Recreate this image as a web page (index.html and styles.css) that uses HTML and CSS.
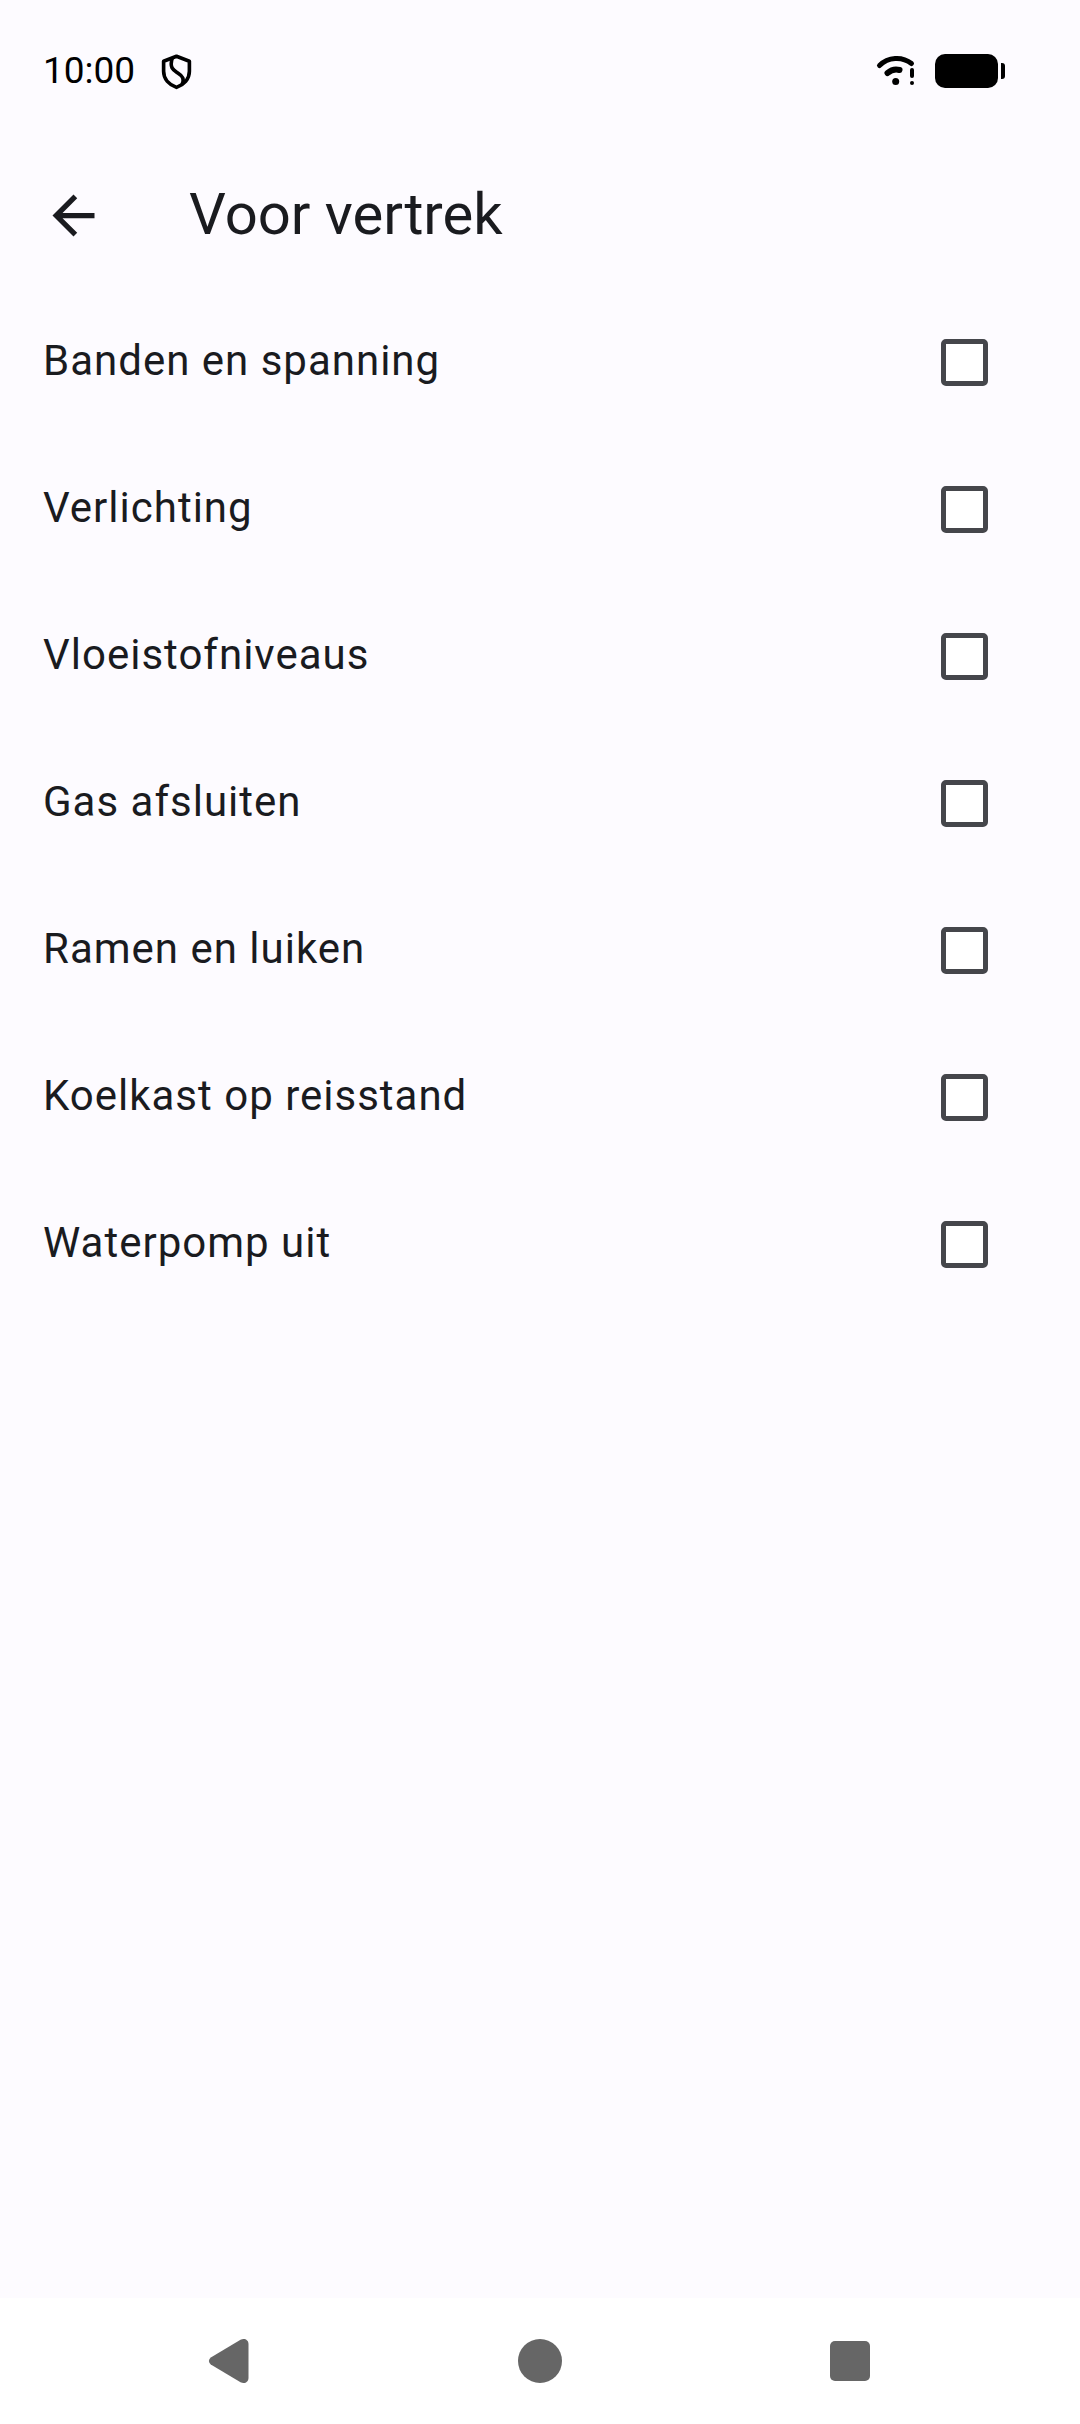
FILE: index.html
```html
<!DOCTYPE html>
<html lang="nl">
<head>
<meta charset="utf-8">
<meta name="viewport" content="width=device-width, initial-scale=1">
<title>Voor vertrek</title>
<link rel="stylesheet" href="styles.css">
</head>
<body>
<div class="screen">
  <div class="status-bar">
    <time class="clock">10:00</time>
    <svg class="shield" viewBox="0 0 98 112" width="33" height="37" fill="none" stroke="currentColor" stroke-width="11" stroke-linejoin="round" aria-hidden="true">
      <path d="M49 10 10 25V55C10 79 27 96 49 104 71 96 88 79 88 55V25Z"/>
      <path d="M36 16C27 45 40 52 52 60 69 71 73 79 66 95"/>
    </svg>
    <svg class="wifi" viewBox="0 0 42 38" width="42" height="38" fill="none" stroke="currentColor" stroke-width="5" stroke-linecap="round" aria-hidden="true">
      <path d="M4.500 13.500C13 5 27 4 36.500 11.500"/>
      <path d="M12.500 21C16 18 21 17 24.500 18" stroke-width="6"/>
      <circle cx="20.700" cy="29.500" r="3.500" fill="currentColor" stroke="none"/>
      <path d="M37 18V24" stroke-width="4"/>
      <circle cx="37" cy="31" r="2" fill="currentColor" stroke="none"/>
    </svg>
    <svg class="battery" viewBox="0 0 70 34" width="70" height="34" fill="currentColor" aria-hidden="true">
      <rect width="63" height="34" rx="10"/>
      <path d="M66 9h1a3 3 0 0 1 3 3v10a3 3 0 0 1-3 3h-1z"/>
    </svg>
  </div>

  <header class="app-bar">
    <button class="icon-button" type="button" aria-label="Terug">
      <svg viewBox="0 0 24 24" width="63" height="63" fill="currentColor" aria-hidden="true">
        <path d="M20 11H7.830l5.590-5.590L12 4l-8 8 8 8 1.410-1.410L7.830 13H20z"/>
      </svg>
    </button>
    <h1 class="title">Voor vertrek</h1>
  </header>

  <main class="content">
    <ul class="checklist">
      <li><label class="item"><span class="item-text">Banden en spanning</span><input class="check" type="checkbox"></label></li>
      <li><label class="item"><span class="item-text">Verlichting</span><input class="check" type="checkbox"></label></li>
      <li><label class="item"><span class="item-text">Vloeistofniveaus</span><input class="check" type="checkbox"></label></li>
      <li><label class="item"><span class="item-text">Gas afsluiten</span><input class="check" type="checkbox"></label></li>
      <li><label class="item"><span class="item-text">Ramen en luiken</span><input class="check" type="checkbox"></label></li>
      <li><label class="item"><span class="item-text">Koelkast op reisstand</span><input class="check" type="checkbox"></label></li>
      <li><label class="item"><span class="item-text">Waterpomp uit</span><input class="check" type="checkbox"></label></li>
    </ul>
  </main>

  <nav class="nav-bar" aria-label="Systeem">
    <button class="nav-button" type="button" aria-label="Vorige">
      <svg viewBox="0 0 44 44" width="44" height="44" fill="currentColor" aria-hidden="true">
        <path d="M32.500 .800 2.800 18.500Q-1 22 2.800 25.500L32.500 43.200C36.500 45.300 40.500 43 40.500 39V5C40.500 1 36.500-1.300 32.500 .800Z"/>
      </svg>
    </button>
    <button class="nav-button" type="button" aria-label="Startscherm">
      <svg viewBox="0 0 44 44" width="44" height="44" fill="currentColor" aria-hidden="true"><circle cx="22" cy="22" r="22"/></svg>
    </button>
    <button class="nav-button" type="button" aria-label="Overzicht">
      <svg viewBox="0 0 44 44" width="44" height="44" fill="currentColor" aria-hidden="true"><rect x="2" y="2" width="40" height="40" rx="5"/></svg>
    </button>
  </nav>
</div>
</body>
</html>
```
FILE: styles.css
```css
* {
  box-sizing: border-box;
}

body {
  margin: 0;
  background: #fdfbff;
  color: #1a1b1f;
  font-family: Roboto, "Noto Sans", sans-serif;
}

.screen {
  display: flex;
  flex-direction: column;
  min-height: 100vh;
}

svg {
  display: block;
  flex: none;
}

button {
  padding: 0;
  border: 0;
  background: none;
  color: inherit;
  cursor: pointer;
}

.status-bar {
  display: flex;
  align-items: center;
  height: 142px;
  padding: 0 75px 0 43px;
  color: #000;
}

.clock {
  font-size: 37px;
  line-height: 44px;
}

.shield {
  margin-left: 25px;
}

.wifi {
  margin-left: auto;
}

.battery {
  margin-left: 18px;
}

.app-bar {
  display: flex;
  align-items: center;
  gap: 84px;
  height: 147px;
  padding: 0 42px;
}

.title {
  margin: 0;
  padding-bottom: 3px;
  font-size: 58px;
  font-weight: 400;
  line-height: 74px;
}

.content {
  flex: 1;
}

.checklist {
  margin: 0;
  padding: 0;
  list-style: none;
}

.item {
  display: flex;
  align-items: center;
  justify-content: space-between;
  height: 147px;
  padding: 0 92px 0 43px;
  font-size: 42px;
  line-height: 64px;
  letter-spacing: 1px;
}

.item-text {
  padding-bottom: 3px;
}

.check {
  appearance: none;
  flex: none;
  width: 47px;
  height: 47px;
  margin: 0;
  border: 5px solid #45464b;
  border-radius: 5px;
  background: #fff;
}

.check:checked {
  background: #45464b;
}

.nav-bar {
  display: grid;
  grid-template-columns: repeat(3, 1fr);
  height: 126px;
  padding: 0 75px;
  background: #fff;
  color: #666;
}

.nav-button {
  display: grid;
  place-items: center;
}
```
